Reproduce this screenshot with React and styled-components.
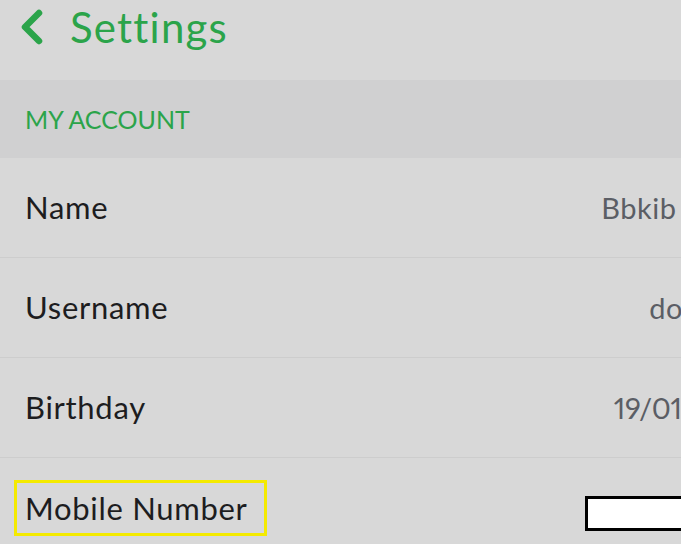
import React from "react";
import styled, { createGlobalStyle } from "styled-components";

const Global = createGlobalStyle`
  html, body { margin: 0; padding: 0; background: #d8d8d8; overflow: hidden; }
  body { font-family: Lato, "Open Sans", sans-serif; }
`;

const Screen = styled.div`
  width: 681px;
  height: 544px;
  overflow: hidden;
  background: #d8d8d8;
`;

const Inner = styled.div`
  width: 780px;
`;

const Header = styled.header`
  height: 80px;
  box-sizing: border-box;
  display: flex;
  align-items: center;
  gap: 26px;
  padding: 0 0 26px 20px;
  color: #2ba44a;
`;

const Title = styled.h1`
  margin: 0;
  font-size: 42px;
  font-weight: 400;
  letter-spacing: 1.2px;
  line-height: 1;
`;

const Section = styled.div`
  height: 78px;
  background: #d0d0d1;
  display: flex;
  align-items: center;
  padding-left: 25px;
  color: #2ba44a;
  font-size: 25px;
  letter-spacing: 0;
`;

const Row = styled.div`
  height: 99px;
  border-bottom: 1px solid #cdcdcd;
  display: flex;
  align-items: center;
  justify-content: space-between;
  padding: 0 28px 0 25px;
`;

const Label = styled.span`
  font-size: 31px;
  letter-spacing: 0.7px;
  line-height: 37px;
  color: #1d1d1f;
  ${(p) =>
    p.$highlight &&
    `
    border: 3px solid #f4ea00;
    margin-left: -11px;
    padding: 7px 16px 6px 8px;
  `}
`;

const Value = styled.span`
  font-size: 29px;
  letter-spacing: ${(p) => (p.$digits ? "-0.4px" : "0.5px")};
  font-variant-numeric: proportional-nums;
  color: #5b5e65;
  white-space: nowrap;
`;

const Redacted = styled.div`
  box-sizing: border-box;
  width: 167px;
  height: 35px;
  border: 3px solid #000;
  background: #fff;
  margin-top: 11px;
`;

const Chevron = () => (
  <svg width="24" height="36" viewBox="0 0 24 36">
    <polyline
      points="19,4 5,18 19,32"
      fill="none"
      stroke="#2ba44a"
      strokeWidth="6.5"
      strokeLinecap="round"
      strokeLinejoin="round"
    />
  </svg>
);

const rows = [
  { label: "Name", value: "Bbkib Bakir" },
  { label: "Username", value: "dovakin" },
  { label: "Birthday", value: "19/01/1996", digits: true },
];

export default function App() {
  return (
    <Screen>
      <Global />
      <Inner>
        <Header>
          <Chevron />
          <Title>Settings</Title>
        </Header>
        <Section>MY ACCOUNT</Section>
        {rows.map((r) => (
          <Row key={r.label}>
            <Label>{r.label}</Label>
            <Value $digits={r.digits}>{r.value}</Value>
          </Row>
        ))}
        <Row>
          <Label $highlight>Mobile Number</Label>
          <Redacted />
        </Row>
      </Inner>
    </Screen>
  );
}
